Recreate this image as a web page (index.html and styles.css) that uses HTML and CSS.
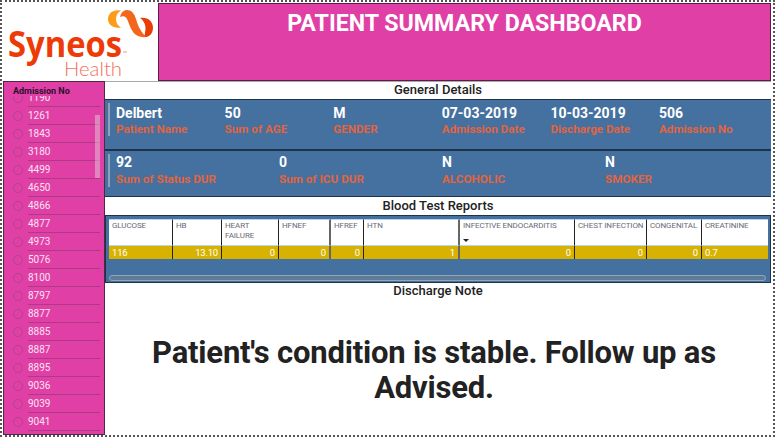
FILE: index.html
```html
<!DOCTYPE html>
<html lang="en">
<head>
    <meta charset="UTF-8">
    <title>Patient Summary Dashboard</title>
    <link rel="stylesheet" href="styles.css">
</head>
<body>
    <div class="page">
        <div class="logo">
            <svg width="155" height="78" viewBox="0 0 155 78">
                <path d="M118 7.5C110 6 105 10.5 105 16C105 22 110 25.5 118 24.5C115 23 113 20 113 16C113 12 115 9 118 7.5Z" fill="#fb9d1a"/>
                <path d="M117 14C118 9.5 121 7 124 7C129 7 131.5 11 133 16C135 23 138 30 144 33.8C138 35 133 33 130 29C127 25 126 20 124 16C122.5 13 120 12.5 117 14Z" fill="#f4661c"/>
                <path d="M137 15C144 13.5 150 18 150 24.5C150 30 147 33.5 143 34C141 33 142 31 142.5 26C142.8 21 140 17 137 15Z" fill="#ea3c05"/>
                <text x="5" y="54" class="logo-main" textLength="114" lengthAdjust="spacingAndGlyphs">Syneos</text>
                <rect x="120" y="48.5" width="4" height="1" fill="#f09a86"/>
                <text x="61" y="73" class="logo-sub" textLength="58" lengthAdjust="spacingAndGlyphs">Health</text>
            </svg>
        </div>
        <header class="banner">
            <h1>PATIENT SUMMARY DASHBOARD</h1>
        </header>
        <aside class="slicer">
            <div class="slicer-title">Admission No</div>
            <ul class="slicer-list">
                <li><i></i><span>1190</span></li>
                <li><i></i><span>1261</span></li>
                <li><i></i><span>1843</span></li>
                <li><i></i><span>3180</span></li>
                <li><i></i><span>4499</span></li>
                <li><i></i><span>4650</span></li>
                <li><i></i><span>4866</span></li>
                <li><i></i><span>4877</span></li>
                <li><i></i><span>4973</span></li>
                <li><i></i><span>5076</span></li>
                <li><i></i><span>8100</span></li>
                <li><i></i><span>8797</span></li>
                <li><i></i><span>8877</span></li>
                <li><i></i><span>8885</span></li>
                <li><i></i><span>8887</span></li>
                <li><i></i><span>8895</span></li>
                <li><i></i><span>9036</span></li>
                <li><i></i><span>9039</span></li>
                <li><i></i><span>9041</span></li>
            </ul>
            <div class="scroll-thumb"></div>
        </aside>
        <main class="content">
            <h2 class="section-title first">General Details</h2>
            <section class="cards cards-six">
                <div class="card"><b>Delbert</b><span>Patient Name</span></div>
                <div class="card"><b>50</b><span>Sum of AGE</span></div>
                <div class="card"><b>M</b><span>GENDER</span></div>
                <div class="card"><b>07-03-2019</b><span>Admission Date</span></div>
                <div class="card"><b>10-03-2019</b><span>Discharge Date</span></div>
                <div class="card"><b>506</b><span>Admission No</span></div>
            </section>
            <section class="cards cards-four">
                <div class="card"><b>92</b><span>Sum of Status DUR</span></div>
                <div class="card"><b>0</b><span>Sum of ICU DUR</span></div>
                <div class="card"><b>N</b><span>ALCOHOLIC</span></div>
                <div class="card"><b>N</b><span>SMOKER</span></div>
            </section>
            <h2 class="section-title">Blood Test Reports</h2>
            <section class="report">
                <div class="table">
                    <div class="th">GLUCOSE</div>
                    <div class="th">HB</div>
                    <div class="th">HEART FAILURE</div>
                    <div class="th grey">HFNEF</div>
                    <div class="th">HFREF</div>
                    <div class="th grey">HTN</div>
                    <div class="th">INFECTIVE ENDOCARDITIS<em class="sort"></em></div>
                    <div class="th">CHEST INFECTION</div>
                    <div class="th">CONGENITAL</div>
                    <div class="th last">CREATININE</div>
                    <div class="td left">116</div>
                    <div class="td">13.10</div>
                    <div class="td">0</div>
                    <div class="td grey">0</div>
                    <div class="td">0</div>
                    <div class="td grey">1</div>
                    <div class="td">0</div>
                    <div class="td">0</div>
                    <div class="td">0</div>
                    <div class="td left last">0.7</div>
                </div>
                <div class="hscroll"></div>
            </section>
            <h2 class="section-title tight">Discharge Note</h2>
            <p class="note">Patient's condition is stable. Follow up as Advised.</p>
        </main>
    </div>
</body>
</html>
```
FILE: styles.css
```css
html, body {
    margin: 0;
    height: 100%;
    background: #fff;
}
body {
    font-family: "Roboto", "Liberation Sans", sans-serif;
    overflow: hidden;
}
.page {
    box-sizing: border-box;
    width: 775px;
    height: 437px;
    border: 2px dotted #555;
    padding: 1px 2px 0 1px;
    display: grid;
    grid-template-columns: 102px 53px 1fr;
    grid-template-rows: 78px 1fr;
}
.logo {
    grid-column: 1 / 3;
    grid-row: 1;
    background: #fff;
}
.logo svg {
    display: block;
}
.logo-main {
    font: 700 36px "Open Sans", sans-serif;
    fill: #ee3a06;
}
.logo-sub {
    font: 300 20px "Lato", sans-serif;
    fill: #f2705c;
}
.banner {
    grid-column: 3;
    grid-row: 1;
    background: #e040a5;
    border: 1px solid #5c1c48;
    text-align: center;
}
.banner h1 {
    margin: 6px 0 0;
    color: #fff;
    font-size: 23.2px;
    font-weight: 700;
    line-height: 26px;
}
.slicer {
    grid-column: 1;
    grid-row: 2;
    position: relative;
    background: #e040a5;
    border: 1px solid #4a2a44;
    overflow: hidden;
}
.slicer-title {
    height: 9px;
    padding: 5px 0 0 9px;
    font-size: 9px;
    font-weight: 700;
    line-height: 9px;
    color: #2b1030;
    background: #e040a5;
    position: relative;
    z-index: 1;
}
.slicer-list {
    list-style: none;
    margin: -7px 0 0;
    padding: 0;
}
.slicer-list li {
    height: 18px;
    display: flex;
    align-items: center;
    padding-left: 9px;
    color: #fbe3f3;
    font-size: 10px;
}
.slicer-list i {
    box-sizing: border-box;
    flex: none;
    width: 10px;
    height: 10px;
    border: 1px solid #b0458e;
    border-radius: 50%;
    margin-right: 5px;
}
.slicer-list span {
    flex: 1;
    margin-right: 4px;
    line-height: 17px;
    border-bottom: 1px solid #ad3a85;
}
.scroll-thumb {
    position: absolute;
    left: 91px;
    top: 33px;
    width: 5px;
    height: 63px;
    background: rgba(220, 220, 220, 0.45);
}
.content {
    grid-column: 2 / 4;
    grid-row: 2;
    display: flex;
    flex-direction: column;
    min-height: 0;
}
.section-title {
    margin: 0;
    height: 18px;
    text-align: center;
    font-size: 13px;
    font-weight: 500;
    line-height: 18px;
    color: #222;
    background: #fff;
}
.section-title.first {
    height: 17px;
    line-height: 16px;
    border-top: 1px solid #aaa;
}
.section-title.tight {
    line-height: 16px;
}
.cards {
    position: relative;
    display: grid;
    background: #44719f;
    border: 1px solid #1e3348;
    border-width: 1px 0;
    padding-left: 11px;
    color: #fff;
}
.cards::before {
    content: "";
    position: absolute;
    left: 3px;
    top: 3px;
    width: 2px;
    height: 33px;
    background: #8ea3b8;
}
.cards-six {
    height: 49px;
    grid-template-columns: repeat(6, 108.6px);
}
.cards-four {
    height: 45px;
    grid-template-columns: repeat(4, 163px);
}
.card {
    padding-top: 5px;
}
.cards-four .card {
    padding-top: 3px;
}
.card b {
    display: block;
    font-size: 14px;
    line-height: 16px;
}
.cards-four .card b {
    line-height: 17px;
}
.card span {
    display: block;
    font-size: 11.7px;
    font-weight: 700;
    line-height: 16px;
    color: #e2643f;
}
.report {
    box-sizing: border-box;
    height: 68px;
    background: #44719f;
    border: 1px solid #1e3348;
    padding: 3px 2px 0 3px;
}
.table {
    display: grid;
    grid-template-columns: 64px 49px 57px 52px 33px 96px 115px 72px 55px 66px;
    grid-template-rows: 27px 13px;
}
.th {
    box-sizing: border-box;
    background: #fff;
    border-top: 1px solid #b9d3ea;
    border-bottom: 1px solid #b9d3ea;
    border-right: 1px solid #222;
    padding: 1px 0 0 3px;
    color: #6a6a78;
    font-size: 8px;
    line-height: 10px;
    letter-spacing: -0.1px;
    position: relative;
}
.td {
    box-sizing: border-box;
    background: #d8b200;
    border-right: 1px solid #222;
    padding-right: 3px;
    color: #fff;
    font-size: 9.5px;
    line-height: 13px;
    letter-spacing: -0.2px;
    text-align: right;
}
.td.left {
    text-align: left;
    padding-left: 3px;
}
.grey {
    border-right: 2px solid #666;
}
.last {
    border-right: 0;
}
.sort {
    position: absolute;
    left: 3px;
    bottom: 3px;
    border: 3px solid transparent;
    border-top: 3px solid #222;
    border-bottom: 0;
}
.hscroll {
    box-sizing: border-box;
    height: 6px;
    margin: 16px 2px 0 0;
    background: #5f7a94;
    border: 1px solid #8ea6bb;
    border-radius: 3px;
}
.note {
    flex: 1;
    margin: 0;
    padding: 34px 44px 0 36px;
    background: #fff;
    text-align: center;
    font-size: 31px;
    font-weight: 700;
    line-height: 35px;
    letter-spacing: -0.2px;
    color: #222;
}
```
